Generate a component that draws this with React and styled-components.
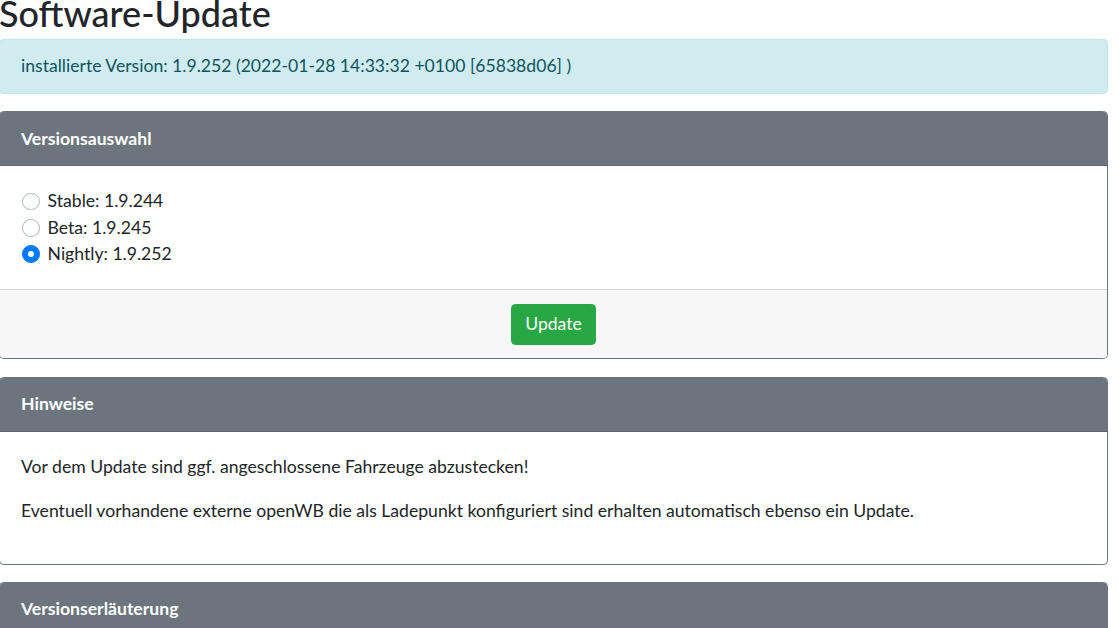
import React, { useState } from "react";
import styled, { createGlobalStyle } from "styled-components";

const GlobalStyle = createGlobalStyle`
  html, body {
    margin: 0;
    padding: 0;
    background: #fff;
  }
  body {
    font-family: "Lato", "Open Sans", sans-serif;
    font-size: 17.6px;
    line-height: 26.4px;
    color: #212529;
    overflow: hidden;
  }
  * {
    box-sizing: border-box;
  }
`;

const versions = [
  { id: "stable", label: "Stable: 1.9.244" },
  { id: "beta", label: "Beta: 1.9.245" },
  { id: "nightly", label: "Nightly: 1.9.252" },
];

const App = () => {
  const [selected, setSelected] = useState("nightly");

  return (
    <Page>
      <GlobalStyle />
      <Title>Software-Update</Title>
      <Alert>installierte Version: 1.9.252 (2022-01-28 14:33:32 +0100 [65838d06] )</Alert>

      <Card>
        <CardHeader>Versionsauswahl</CardHeader>
        <CardBody>
          {versions.map((v) => (
            <RadioRow key={v.id} onClick={() => setSelected(v.id)}>
              <RadioDot $checked={selected === v.id} />
              {v.label}
            </RadioRow>
          ))}
        </CardBody>
        <CardFooter>
          <Button>Update</Button>
        </CardFooter>
      </Card>

      <Card>
        <CardHeader>Hinweise</CardHeader>
        <CardBody>
          <Paragraph>Vor dem Update sind ggf. angeschlossene Fahrzeuge abzustecken!</Paragraph>
          <Paragraph>
            Eventuell vorhandene externe openWB die als Ladepunkt konfiguriert sind erhalten automatisch
            ebenso ein Update.
          </Paragraph>
        </CardBody>
      </Card>

      <Card>
        <CardHeader>Versionserläuterung</CardHeader>
        <CardBody>
          <Paragraph>Stable: getestete Version.</Paragraph>
        </CardBody>
      </Card>
    </Page>
  );
};

const Page = styled.div`
  width: 1109px;
  margin-left: -1px;
  margin-top: -7px;
`;

const Title = styled.h1`
  font-size: 36px;
  font-weight: 500;
  line-height: 40px;
  margin: 0 0 6px;
  color: #212529;
`;

const Alert = styled.div`
  background: #d1ecf1;
  border: 1px solid #bee5eb;
  color: #0c5460;
  border-radius: 4.4px;
  padding: 13.2px 21px;
  margin-bottom: 17.6px;
`;

const Card = styled.div`
  border: 1px solid #6c757d;
  border-radius: 4.4px;
  margin-bottom: 17.6px;
  overflow: hidden;
  background: #fff;
`;

const CardHeader = styled.div`
  background: #6c757d;
  color: #fff;
  font-weight: 700;
  padding: 13.2px 21px;
  border-bottom: 1px solid rgba(0, 0, 0, 0.125);
`;

const CardBody = styled.div`
  padding: 22px 21px;
`;

const RadioRow = styled.label`
  display: flex;
  align-items: center;
  gap: 8px;
  height: 26.4px;
  cursor: pointer;
`;

const RadioDot = styled.span`
  width: 17.6px;
  height: 17.6px;
  margin-left: 1px;
  border-radius: 50%;
  flex-shrink: 0;
  border: 1px solid ${(p) => (p.$checked ? "#007bff" : "#adb5bd")};
  background: ${(p) => (p.$checked ? "#007bff" : "#fff")};
  display: flex;
  align-items: center;
  justify-content: center;

  &::after {
    content: "";
    width: 6.6px;
    height: 6.6px;
    border-radius: 50%;
    background: #fff;
    display: ${(p) => (p.$checked ? "block" : "none")};
  }
`;

const CardFooter = styled.div`
  background: #f7f7f7;
  border-top: 1px solid rgba(0, 0, 0, 0.125);
  padding: 13.2px 22px;
  text-align: center;
`;

const Button = styled.button`
  font-family: inherit;
  font-size: 17.6px;
  line-height: 26.4px;
  color: #fff;
  background: #28a745;
  border: 1px solid #28a745;
  border-radius: 4.4px;
  padding: 6.6px 13.2px;
  cursor: pointer;
`;

const Paragraph = styled.p`
  margin: 0 0 17.6px;
`;

export default App;
